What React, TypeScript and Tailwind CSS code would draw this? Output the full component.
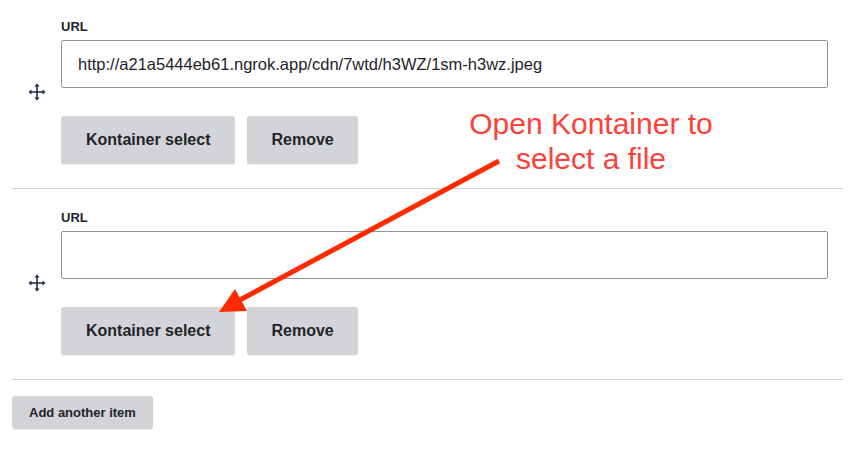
import React from "react";

const font = { fontFamily: '"Liberation Sans", Arial, sans-serif' };

const MoveHandle = () => (
  <svg width="18" height="18" viewBox="0 0 18 18" className="text-[#1d2a46]">
    <path d="M9 2.5v13M2.5 9h13" stroke="currentColor" strokeWidth="1.6" />
    <path d="M9 0.5l2.6 3h-5.2z" fill="currentColor" />
    <path d="M9 17.5l2.6-3h-5.2z" fill="currentColor" />
    <path d="M0.5 9l3-2.6v5.2z" fill="currentColor" />
    <path d="M17.5 9l-3-2.6v5.2z" fill="currentColor" />
  </svg>
);

const GrayButton = ({ children, wide }: { children: React.ReactNode; wide?: boolean }) => (
  <button
    className={
      "h-12 rounded-[3px] bg-[#d3d4d8] text-[16px] font-bold text-[#232429] shadow-[0_1px_1px_rgba(0,0,0,0.08)] " +
      (wide ? "px-[25px]" : "px-6")
    }
  >
    {children}
  </button>
);

const UrlItem = ({ value, first }: { value: string; first?: boolean }) => (
  <div
    className={
      "flex items-center border-b border-[#d3d3d7] pb-6 " +
      (first ? "pt-[19px]" : "pt-[21px]")
    }
  >
    <div className="w-[49px] flex justify-center shrink-0 pt-px">
      <MoveHandle />
    </div>
    <div className="flex-1 flex flex-col">
      <label className="text-[13px] leading-4 font-bold text-[#232429] mb-[5px]">
        URL
      </label>
      <div className="h-12 mr-[15px] border border-[#8f9199] rounded-[2px] flex items-center pl-4 text-[16.5px] text-[#232429]">
        {value}
      </div>
      <div className="flex gap-3 mt-7">
        <GrayButton wide>Kontainer select</GrayButton>
        <GrayButton>Remove</GrayButton>
      </div>
    </div>
  </div>
);

export default function App() {
  return (
    <div className="relative w-[848px] h-[451px] bg-white overflow-hidden" style={font}>
      <div className="pl-3 pr-[5px]">
        <UrlItem first value="http://a21a5444eb61.ngrok.app/cdn/7wtd/h3WZ/1sm-h3wz.jpeg" />
        <UrlItem value="" />
        <button className="mt-4 h-[33px] px-[17px] rounded-[3px] bg-[#d3d4d8] text-[13px] font-bold text-[#232429] shadow-[0_1px_1px_rgba(0,0,0,0.08)]">
          Add another item
        </button>
      </div>

      {/* annotation */}
      <div className="absolute left-[441px] top-[106px] w-[300px] text-center text-[30px] leading-[35px] text-[#fc4139]">
        Open Kontainer to
        <br />
        select a file
      </div>
      <svg className="absolute left-0 top-0 pointer-events-none" width="848" height="451">
        <line x1="499" y1="161" x2="238" y2="301" stroke="#ff2a00" strokeWidth="5" />
        <polygon points="219,312 235,289 247,311" fill="#ff2a00" />
      </svg>
    </div>
  );
}
